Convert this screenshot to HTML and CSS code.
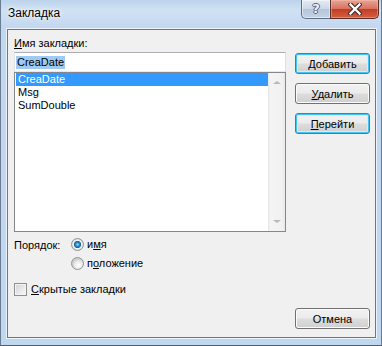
FILE: index.html
```html
<!DOCTYPE html>
<html>
  <head>
    <meta charset="utf-8">
    <title>Закладка</title>
    <link rel="stylesheet" href="styles.css">
  </head>
  <body>
  <div id="dialog">
    <div class="titlebar">
      <span class="title">Закладка</span>
      <div class="caption-buttons">
        <div class="cap-help">?</div>
        <div class="cap-close">
          <svg width="14" height="12" viewBox="0 0 14 12">
            <path d="M2.5 1.5 L11.5 10.5 M11.5 1.5 L2.5 10.5" stroke="#3d2420" stroke-width="4.4" stroke-linecap="square" fill="none"/>
            <path d="M2.5 1.5 L11.5 10.5 M11.5 1.5 L2.5 10.5" stroke="#ffffff" stroke-width="2.4" stroke-linecap="square" fill="none"/>
          </svg>
        </div>
      </div>
    </div>
    <div class="client">
      <div class="left-col">
        <div class="field-label"><u>И</u>мя закладки:</div>
        <div class="name-input"><span class="selection">CreaDate</span></div>
        <div class="listbox">
          <ul class="items">
            <li class="item selected">CreaDate</li>
            <li class="item">Msg</li>
            <li class="item">SumDouble</li>
          </ul>
          <div class="scrollbar">
            <span class="arrow-up"></span>
            <span class="arrow-down"></span>
          </div>
        </div>
        <div class="order">
          <span class="order-label">Порядок:</span>
          <div class="radios">
            <div class="radio checked"><span class="dot"></span><span class="radio-text">и<u>м</u>я</span></div>
            <div class="radio"><span class="dot"></span><span class="radio-text">п<u>о</u>ложение</span></div>
          </div>
        </div>
        <div class="check"><span class="box"></span><span class="check-text"><u>С</u>крытые закладки</span></div>
      </div>
      <div class="right-col">
        <button class="btn focused"><u>Д</u>обавить</button>
        <button class="btn"><u>У</u>далить</button>
        <button class="btn focused"><u>П</u>ерейти</button>
        <button class="btn cancel">Отмена</button>
      </div>
    </div>
  </div>
  </body>
</html>
```
FILE: styles.css
```css
* {
  box-sizing: border-box;
}
body {
  margin: 0;
  padding: 0;
  font-family: "Liberation Sans", Arial, sans-serif;
  font-size: 11px;
  color: #000;
  background-color: #c6dbf1;
}
#dialog {
  width: 382px;
  height: 346px;
  display: flex;
  flex-direction: column;
  padding: 0 5px 7px 6px;
  border-left: 1px solid #6a7c92;
  border-right: 1px solid #6a7c92;
  border-bottom: 1px solid #4d5d70;
  background: linear-gradient(180deg, #bcd3ec 0px, #d0e1f3 10px, #c2d8ef 28px, #c0d7f0 100%);
}
.titlebar {
  height: 29px;
  display: flex;
  align-items: flex-start;
}
.title {
  font-size: 12px;
  padding-top: 6px;
  padding-left: 1px;
  text-shadow: 0 0 6px #fff, 0 0 3px #fff;
}
.caption-buttons {
  margin-left: auto;
  margin-right: -3px;
  display: flex;
}
.cap-help {
  width: 29px;
  height: 19px;
  border: 1px solid #5f6f84;
  border-top: none;
  border-right: none;
  border-radius: 0 0 0 5px;
  background: linear-gradient(180deg, #e4ebf3 0%, #cdd9e6 48%, #b5c6d9 52%, #c4d3e4 100%);
  box-shadow: inset 0 0 0 1px rgba(255,255,255,0.45);
  color: #eef2f6;
  font-family: "DejaVu Sans", sans-serif;
  font-weight: bold;
  font-size: 13px;
  line-height: 18px;
  text-align: center;
  text-shadow: 1px 0 0 #56627a, -1px 0 0 #56627a, 0 1px 0 #56627a, 0 -1px 0 #56627a;
}
.cap-close {
  width: 49px;
  height: 19px;
  border: 1px solid #5a2e28;
  border-top: none;
  border-radius: 0 0 5px 0;
  background: linear-gradient(180deg, #e9a595 0%, #d87260 48%, #c43d25 52%, #d2603f 100%);
  box-shadow: inset 0 0 0 1px rgba(255,200,190,0.4);
  display: flex;
  align-items: center;
  justify-content: center;
}
.cap-close svg {
  display: block;
}

.client {
  flex: 1;
  display: flex;
  gap: 9px;
  padding: 6px 5px 8px 6px;
  border: 1px solid #66788e;
  background-color: #f0f0f0;
  box-shadow: 0 0 0 1px rgba(255,255,255,0.7);
}
.left-col {
  width: 272px;
}
.field-label {
  height: 14px;
  line-height: 14px;
  margin-bottom: 2px;
}
.name-input {
  height: 20px;
  display: flex;
  align-items: center;
  padding: 0 1px;
  background-color: #fff;
  border: 1px solid;
  border-color: #abadb3 #dbdfe6 #e3e9ef #e2e3ea;
}
.selection {
  background-color: #9fcaf1;
  height: 13px;
  line-height: 13px;
  padding: 0 1px;
}
.listbox {
  height: 160px;
  display: flex;
  border: 1px solid #828790;
  background-color: #fff;
}
.items {
  flex: 1;
  margin: 0;
  padding: 0 0 0 1px;
  list-style-type: none;
}
.item {
  height: 13px;
  line-height: 13px;
  padding-left: 2px;
}
.item.selected {
  background-color: #3399ff;
  color: #fff;
}
.scrollbar {
  width: 17px;
  display: flex;
  flex-direction: column;
  align-items: center;
  justify-content: space-between;
  padding: 8px 0;
  background: linear-gradient(90deg, #e4e4e4 0px, #f4f4f4 2px, #f1f1f1 14px, #e8e8e8 17px);
}
.arrow-up {
  width: 0;
  height: 0;
  border-left: 4px solid transparent;
  border-right: 4px solid transparent;
  border-bottom: 3px solid #b8b8b8;
}
.arrow-down {
  width: 0;
  height: 0;
  border-left: 4px solid transparent;
  border-right: 4px solid transparent;
  border-top: 3px solid #b8b8b8;
}

.order {
  display: flex;
  margin-top: 6px;
}
.order-label {
  width: 57px;
  line-height: 13px;
  padding-top: 1px;
}
.radios {
  display: flex;
  flex-direction: column;
  gap: 6px;
}
.radio {
  display: flex;
  align-items: center;
  gap: 3px;
  height: 13px;
}
.radio-text {
  padding-bottom: 2px;
}
.dot {
  width: 13px;
  height: 13px;
  border-radius: 50%;
  border: 1px solid #939393;
  background: radial-gradient(circle at 60% 65%, #ffffff 0px, #e9e9e9 4px, #cfcfcf 6px);
}
.radio.checked .dot {
  background: radial-gradient(circle at 50% 50%, #9ad9f8 0px, #2d8fd0 1.8px, #1b5f9b 3.3px, #f6f6f6 3.9px, #e2e2e2 5px, #cdcdcd 6px);
}
.check {
  display: flex;
  align-items: center;
  gap: 4px;
  margin-top: 13px;
  height: 13px;
}
.check-text {
  padding-bottom: 2px;
}
.box {
  width: 13px;
  height: 13px;
  border: 1px solid #8f8f8f;
  background: linear-gradient(135deg, #cfd3d8 0%, #e9eaec 60%, #f7f7f7 100%);
  box-shadow: inset 0 0 0 1px #f4f4f4;
}

.right-col {
  width: 75px;
  display: flex;
  flex-direction: column;
  gap: 9px;
  padding-top: 17px;
}
.btn {
  height: 21px;
  padding: 0;
  font-family: "Liberation Sans", Arial, sans-serif;
  font-size: 11px;
  color: #000;
  border: 1px solid #707070;
  border-radius: 3px;
  background: linear-gradient(180deg, #f2f2f2 0%, #ebebeb 48%, #dddddd 52%, #cfcfcf 100%);
  box-shadow: inset 0 0 0 1px #fbfbfb;
}
.btn.focused {
  border-color: #3c7fb1;
  box-shadow: inset 0 0 0 1px #43c5f0, inset 0 0 0 2px #cdeefa;
}
.btn.cancel {
  margin-top: auto;
}
```
